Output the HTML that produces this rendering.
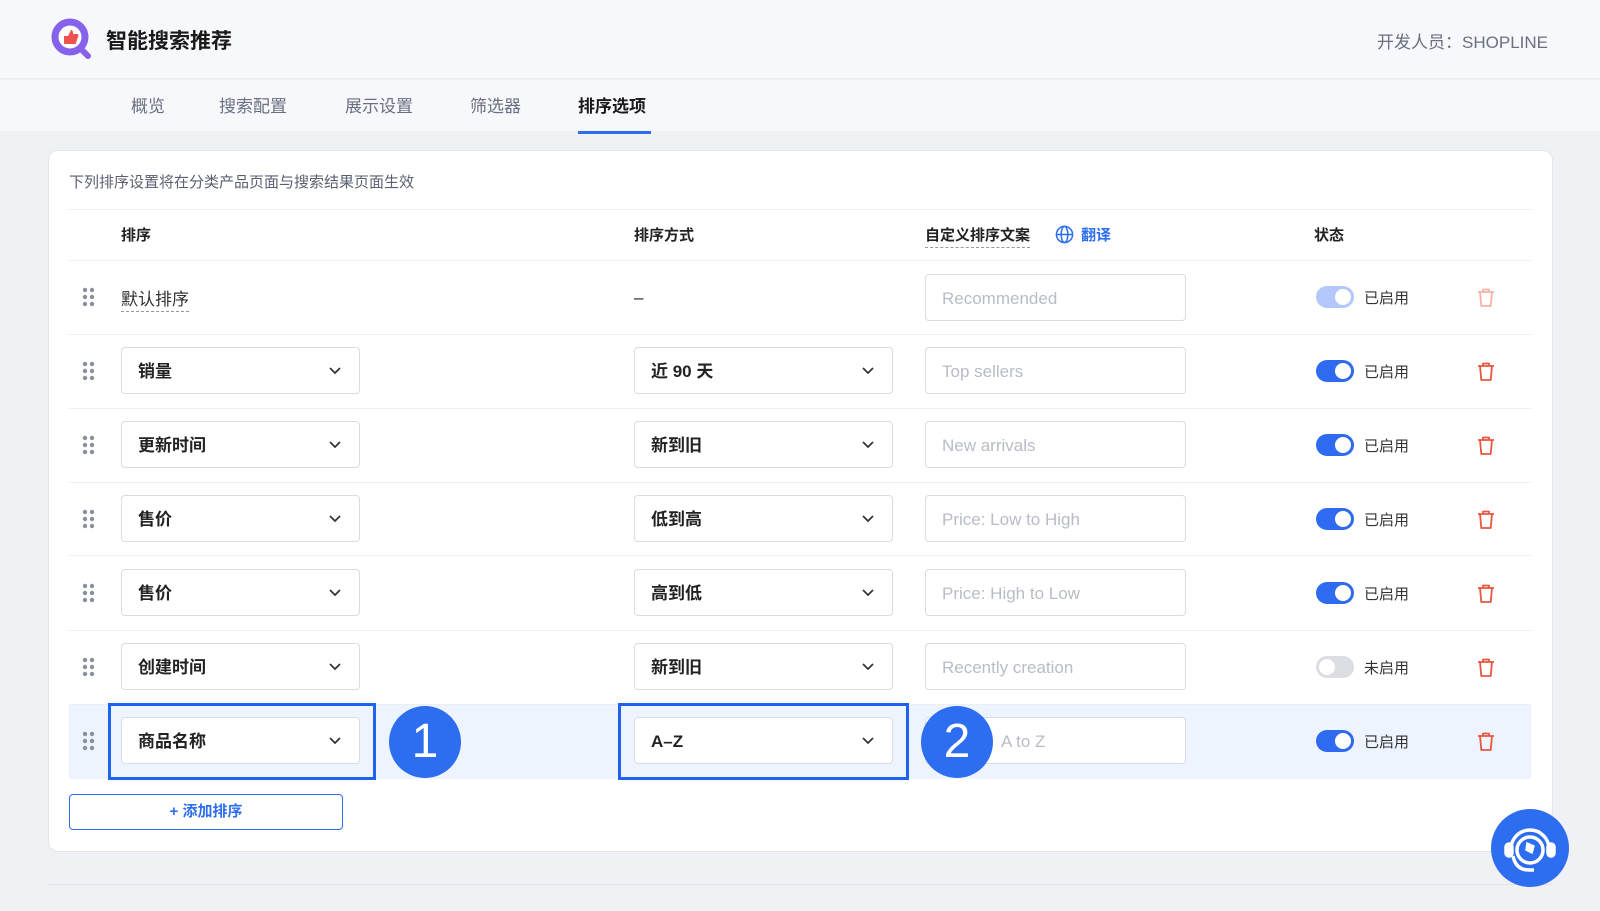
<!DOCTYPE html>
<html><head><meta charset="utf-8">
<style>
*{box-sizing:border-box;margin:0;padding:0}
body{width:1600px;height:911px;background:#f0f1f5;font-family:"Liberation Sans","Noto Sans CJK SC",sans-serif;position:relative;overflow:hidden;color:#222}
.a{position:absolute}
.hdr{left:0;top:0;width:1600px;height:79px;background:#f7f8fb;border-bottom:1px solid #eceef2}
.tabs{left:0;top:80px;width:1600px;height:51px;background:#f7f8fb}
.tab{top:92px;font-size:17px;color:#6b7080}
.card{left:48px;top:150px;width:1505px;height:702px;background:#fff;border:1px solid #e3e5ea;border-radius:10px}
.hline{height:1px;background:#eceef2;left:69px;width:1462px}
.th{font-size:15px;font-weight:bold;color:#222;top:224px}
.sel{height:47px;border:1px solid #d9dce3;border-radius:4px;background:#fff;font-size:17px;font-weight:bold;color:#222;padding-left:16px;line-height:47px}
.sel svg{position:absolute;right:18px;top:19px}
.inp{left:925px;width:261px;height:47px;border:1px solid #d9dce3;border-radius:4px;background:#fff;font-size:17px;color:#b8bcc6;padding-left:16px;line-height:47px}
.tg{left:1316px;width:38px;height:22px;border-radius:11px;background:#2f6bf0}
.tg::after{content:"";position:absolute;right:3px;top:3px;width:16px;height:16px;border-radius:50%;background:#fff}
.tg.off{background:#dcdde2}.tg.off::after{left:3px;right:auto}
.tg.lt{background:#b3c7fb}
.st{left:1364px;font-size:15px;color:#333}
.drag{left:82px}
.circ{width:72px;height:72px;border-radius:50%;background:#2d6df0;color:#fff;font-size:48px;text-align:center;line-height:72px;font-family:"Liberation Sans",sans-serif}
.box{border:3px solid #1d62f0}
</style></head><body>
<div class="a hdr"></div>
<svg class="a" style="left:50px;top:17px" width="44" height="44" viewBox="0 0 44 44"><circle cx="20" cy="20" r="15" fill="none" stroke="#8662ea" stroke-width="7"/><line x1="30" y1="31" x2="38" y2="39" stroke="#8662ea" stroke-width="6" stroke-linecap="round"/><circle cx="20" cy="20" r="11" fill="#fff"/><path d="M14 19h4v8h-4zM18 19l3-6c2 0 2 2 2 4h4c1 0 2 1 1 3l-2 6c0 1-1 1-2 1h-6z" fill="#ef5350"/></svg>
<div class="a" style="left:106px;top:25px;font-size:21px;font-weight:bold;color:#1a1a1a">智能搜索推荐</div>
<div class="a" style="right:52px;top:28px;font-size:17px;color:#6b7080">开发人员：SHOPLINE</div>
<div class="a tabs"></div>
<div class="a tab" style="left:131px">概览</div>
<div class="a tab" style="left:219px">搜索配置</div>
<div class="a tab" style="left:345px">展示设置</div>
<div class="a tab" style="left:470px">筛选器</div>
<div class="a tab" style="left:578px;color:#1a1a1a;font-weight:bold">排序选项</div>
<div class="a" style="left:578px;top:131px;width:73px;height:3px;background:#2d6df0"></div>
<div class="a card"></div>
<div class="a" style="left:69px;top:171px;font-size:15px;color:#5b6070">下列排序设置将在分类产品页面与搜索结果页面生效</div>
<div class="a hline" style="top:209px"></div>
<div class="a th" style="left:121px">排序</div>
<div class="a th" style="left:634px">排序方式</div>
<div class="a th" style="left:925px;border-bottom:1px dashed #999;padding-bottom:2px">自定义排序文案</div>
<svg class="a" style="left:1055px;top:225px" width="19" height="19" viewBox="0 0 20 20" fill="none" stroke="#2d6df0" stroke-width="1.6"><circle cx="10" cy="10" r="8.5"/><ellipse cx="10" cy="10" rx="3.5" ry="8.5"/><line x1="1.5" y1="10" x2="18.5" y2="10"/></svg>
<div class="a th" style="left:1081px;color:#2d6df0">翻译</div>
<div class="a th" style="left:1314px">状态</div>
<div class="a hline" style="top:260px"></div>

<div class="a" style="left:69px;top:704px;width:1462px;height:75px;background:#eef4fd"></div>

<div class="a hline" style="top:334px"></div>
<div class="a hline" style="top:408px"></div>
<div class="a hline" style="top:482px"></div>
<div class="a hline" style="top:555px"></div>
<div class="a hline" style="top:630px"></div>
<div class="a hline" style="top:704px"></div>

<svg width="0" height="0" style="position:absolute"><defs>
<g id="dr" fill="#8a8f9c"><circle cx="3" cy="3" r="2.2"/><circle cx="10" cy="3" r="2.2"/><circle cx="3" cy="10" r="2.2"/><circle cx="10" cy="10" r="2.2"/><circle cx="3" cy="17" r="2.2"/><circle cx="10" cy="17" r="2.2"/></g>
<g id="tr" fill="none" stroke-width="1.8" stroke-linejoin="round"><path d="M2 5h16M7 5V2.5h6V5M4 5l1.3 14h9.4L16 5"/></g>
<path id="ch" d="M1 1l5 5 5-5" fill="none" stroke="#333" stroke-width="1.7"/>
</defs></svg>

<svg class="a drag" style="top:287px" width="14" height="20"><use href="#dr"/></svg>
<div class="a" style="left:121px;top:285px;font-size:17px;color:#333;border-bottom:1px dashed #999;padding-bottom:1px">默认排序</div>
<div class="a" style="left:634px;top:288px;font-size:17px">–</div>
<div class="a inp" style="top:274px">Recommended</div>
<div class="a tg lt" style="top:286px"></div><div class="a st" style="top:287px">已启用</div>
<svg class="a" style="left:1476px;top:287px" width="20" height="21"><use href="#tr" stroke="#f4b2a6"/></svg>

<svg class="a drag" style="top:361px" width="14" height="20"><use href="#dr"/></svg>
<div class="a sel" style="left:121px;top:347px;width:239px">销量<svg width="12" height="8"><use href="#ch"/></svg></div>
<div class="a sel" style="left:634px;top:347px;width:259px">近 90 天<svg width="12" height="8"><use href="#ch"/></svg></div>
<div class="a inp" style="top:347px">Top sellers</div>
<div class="a tg" style="top:360px"></div><div class="a st" style="top:361px">已启用</div>
<svg class="a" style="left:1476px;top:361px" width="20" height="21"><use href="#tr" stroke="#e8573f"/></svg>

<svg class="a drag" style="top:435px" width="14" height="20"><use href="#dr"/></svg>
<div class="a sel" style="left:121px;top:421px;width:239px">更新时间<svg width="12" height="8"><use href="#ch"/></svg></div>
<div class="a sel" style="left:634px;top:421px;width:259px">新到旧<svg width="12" height="8"><use href="#ch"/></svg></div>
<div class="a inp" style="top:421px">New arrivals</div>
<div class="a tg" style="top:434px"></div><div class="a st" style="top:435px">已启用</div>
<svg class="a" style="left:1476px;top:435px" width="20" height="21"><use href="#tr" stroke="#e8573f"/></svg>

<svg class="a drag" style="top:509px" width="14" height="20"><use href="#dr"/></svg>
<div class="a sel" style="left:121px;top:495px;width:239px">售价<svg width="12" height="8"><use href="#ch"/></svg></div>
<div class="a sel" style="left:634px;top:495px;width:259px">低到高<svg width="12" height="8"><use href="#ch"/></svg></div>
<div class="a inp" style="top:495px">Price: Low to High</div>
<div class="a tg" style="top:508px"></div><div class="a st" style="top:509px">已启用</div>
<svg class="a" style="left:1476px;top:509px" width="20" height="21"><use href="#tr" stroke="#e8573f"/></svg>

<svg class="a drag" style="top:583px" width="14" height="20"><use href="#dr"/></svg>
<div class="a sel" style="left:121px;top:569px;width:239px">售价<svg width="12" height="8"><use href="#ch"/></svg></div>
<div class="a sel" style="left:634px;top:569px;width:259px">高到低<svg width="12" height="8"><use href="#ch"/></svg></div>
<div class="a inp" style="top:569px">Price: High to Low</div>
<div class="a tg" style="top:582px"></div><div class="a st" style="top:583px">已启用</div>
<svg class="a" style="left:1476px;top:583px" width="20" height="21"><use href="#tr" stroke="#e8573f"/></svg>

<svg class="a drag" style="top:657px" width="14" height="20"><use href="#dr"/></svg>
<div class="a sel" style="left:121px;top:643px;width:239px">创建时间<svg width="12" height="8"><use href="#ch"/></svg></div>
<div class="a sel" style="left:634px;top:643px;width:259px">新到旧<svg width="12" height="8"><use href="#ch"/></svg></div>
<div class="a inp" style="top:643px">Recently creation</div>
<div class="a tg off" style="top:656px"></div><div class="a st" style="top:657px">未启用</div>
<svg class="a" style="left:1476px;top:657px" width="20" height="21"><use href="#tr" stroke="#e8573f"/></svg>

<svg class="a drag" style="top:731px" width="14" height="20"><use href="#dr"/></svg>
<div class="a sel" style="left:121px;top:717px;width:239px">商品名称<svg width="12" height="8"><use href="#ch"/></svg></div>
<div class="a sel" style="left:634px;top:717px;width:259px">A–Z<svg width="12" height="8"><use href="#ch"/></svg></div>
<div class="a inp" style="top:717px;padding-left:75px">A to Z</div>
<div class="a tg" style="top:730px"></div><div class="a st" style="top:731px">已启用</div>
<svg class="a" style="left:1476px;top:731px" width="20" height="21"><use href="#tr" stroke="#e8573f"/></svg>

<div class="a box" style="left:108px;top:703px;width:268px;height:77px"></div>
<div class="a box" style="left:618px;top:703px;width:291px;height:77px"></div>
<div class="a circ" style="left:389px;top:706px">1</div>
<div class="a circ" style="left:921px;top:706px">2</div>

<div class="a" style="left:69px;top:794px;width:274px;height:36px;border:1px solid #2d6df0;border-radius:4px;color:#2d6df0;font-size:15px;font-weight:bold;text-align:center;line-height:34px">+ 添加排序</div>

<div class="a" style="left:48px;top:884px;width:1505px;height:1px;background:#dfe1e6"></div>

<div class="a" style="left:1491px;top:809px;width:78px;height:78px;border-radius:50%;background:#2d6df0"></div>
<svg class="a" style="left:1491px;top:809px" width="78" height="78" viewBox="0 0 78 78" fill="none" stroke="#fff" stroke-width="3.5"><path d="M20 40a19 19 0 0 1 38 0"/><rect x="15" y="35" width="6" height="12" rx="3" fill="#fff"/><rect x="57" y="35" width="6" height="12" rx="3" fill="#fff"/><circle cx="39" cy="41" r="13"/><path d="M22 47c2 10 8 14 16 14h5"/><path d="M36 34l7 3-2 7-6-3z" fill="#fff" stroke-width="1.5"/></svg>
</body></html>
